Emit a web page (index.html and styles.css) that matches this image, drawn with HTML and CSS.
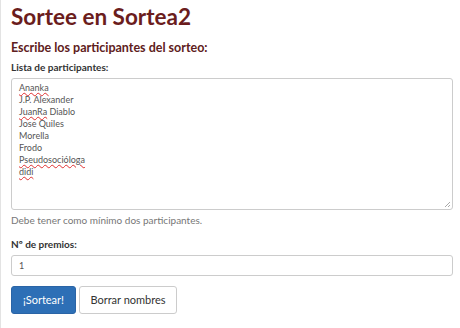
FILE: index.html
```html
<!DOCTYPE html>
<html lang="es">
<head>
<meta charset="utf-8">
<title>Sortee en Sortea2</title>
<link rel="stylesheet" href="styles.css">
</head>
<body>
<div class="page">
  <h1 class="title">Sortee en Sortea2</h1>
  <h2 class="subtitle">Escribe los participantes del sorteo:</h2>
  <label class="label" for="lista">Lista de participantes:</label>
  <div class="textarea" id="lista">
    <div><span class="spell">Ananka</span></div>
    <div>J.P. Alexander</div>
    <div><span class="spell">JuanRa</span> Diablo</div>
    <div>Jose Quiles</div>
    <div>Morella</div>
    <div>Frodo</div>
    <div><span class="spell">Pseudosocióloga</span></div>
    <div><span class="spell">didi</span></div>
    <svg class="grip" width="7" height="7" viewBox="0 0 7 7"><path d="M6 1 L1 6 M6 4 L4 6" stroke="#aaa" stroke-width="1"/></svg>
  </div>
  <p class="help">Debe tener como mínimo dos participantes.</p>
  <label class="label label-premios" for="premios">Nº de premios:</label>
  <div class="input" id="premios">1</div>
  <div class="actions">
    <button class="btn btn-primary">¡Sortear!</button>
    <button class="btn btn-default">Borrar nombres</button>
  </div>
</div>
</body>
</html>
```
FILE: styles.css
```css
html, body {
  margin: 0;
  padding: 0;
  background: #fff;
}
body {
  font-family: Lato, "Open Sans", "Liberation Sans", sans-serif;
  color: #333;
}
.page {
  border-left: 1px solid #e3e3e3;
  min-height: 328px;
  box-sizing: border-box;
  padding: 0 7px 0 10px;
  display: flex;
  flex-direction: column;
}
.title {
  margin: 3px 0 0 0;
  font-size: 22.5px;
  font-weight: 700;
  line-height: 28px;
  color: #6b1d1d;
}
.subtitle {
  margin: 9px 0 0 0;
  font-size: 12.5px;
  font-weight: 700;
  line-height: 16px;
  color: #5e2020;
}
.label {
  display: block;
  margin-top: 4px;
  font-size: 10px;
  font-weight: 700;
  line-height: 14px;
  color: #333;
}
.textarea {
  position: relative;
  margin-top: 4px;
  height: 132px;
  box-sizing: border-box;
  border: 1px solid #ccc;
  border-radius: 3px;
  padding: 3px 7px;
  font-size: 9px;
  line-height: 12px;
  color: #555;
}
.spell {
  text-decoration: underline wavy #e03030;
  text-decoration-thickness: 1px;
  text-underline-offset: 1px;
}
.grip {
  position: absolute;
  right: 1px;
  bottom: 1px;
}
.help {
  margin: 3px 0 0 0;
  font-size: 10px;
  line-height: 14px;
  color: #777;
}
.label-premios {
  margin-top: 10px;
}
.input {
  margin-top: 4px;
  height: 21px;
  box-sizing: border-box;
  border: 1px solid #ccc;
  border-radius: 3px;
  padding: 0 7px;
  font-size: 9px;
  line-height: 19px;
  color: #555;
}
.actions {
  display: flex;
  gap: 3px;
  margin-top: 10px;
}
.btn {
  font-family: inherit;
  height: 28px;
  box-sizing: border-box;
  border-radius: 3px;
  font-size: 11px;
  padding: 0;
  line-height: 26px;
  margin: 0;
}
.btn-primary {
  background: #2d6fb6;
  border: 1px solid #2a64a6;
  color: #fff;
  width: 65px;
}
.btn-default {
  background: #fff;
  border: 1px solid #ccc;
  color: #333;
  width: 98px;
}
```
